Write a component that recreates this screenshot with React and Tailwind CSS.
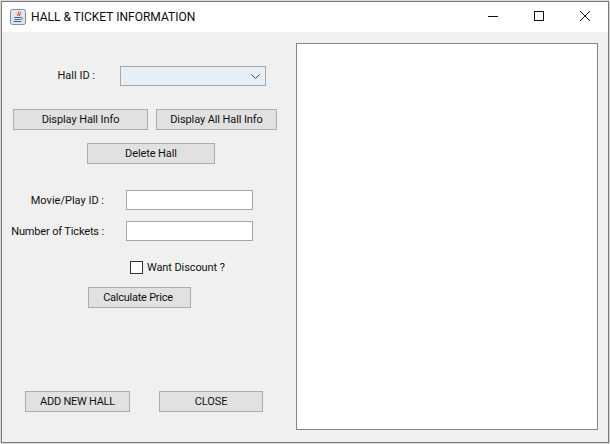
function Btn({ className, children }) {
  return (
    <div className={`h-[21px] pt-px flex items-center justify-center bg-[#e1e1e1] border border-[#adadad] text-[11px] tracking-[-0.1px] text-[#111] ${className}`}>
      {children}
    </div>
  );
}

function JavaIcon() {
  return (
    <svg width="16" height="16" viewBox="0 0 16 16" className="shrink-0">
      <rect x="0.5" y="0.5" width="15" height="15" rx="2" fill="#dfe6ee" stroke="#7c8ea3" />
      <path d="M8.5 2.5C10 4 6.5 5 8 7M10.5 3.5C11 5 9 5.5 9.5 7" fill="none" stroke="#d2541c" strokeWidth="1.2" />
      <path d="M4 8.5h7M4.5 10.5h6M3.5 12.5h8" stroke="#46658a" strokeWidth="1.1" />
      <path d="M11 8.5c2 0 2 2 0 2" fill="none" stroke="#46658a" />
    </svg>
  );
}

export default function App() {
  return (
    <div className="w-[610px] h-[444px] bg-[#d8d8d8] overflow-hidden" style={{ fontFamily: 'Roboto, sans-serif' }}>
      <div className="w-[608px] h-[442px] ml-px mt-px border border-[#7a7a7a] bg-[#f0f0f0] flex flex-col">
        {/* title bar */}
        <div className="h-[30px] bg-white flex items-center shrink-0 pl-[8px]">
          <JavaIcon />
          <span className="ml-[5px] text-[12px] text-[#0a0a0a]">HALL &amp; TICKET INFORMATION</span>
          <div className="ml-auto flex items-center">
            <svg width="46" height="30" viewBox="0 0 46 30">
              <path d="M18 14.5h10" stroke="#111" />
            </svg>
            <svg width="46" height="30" viewBox="0 0 46 30">
              <rect x="18.5" y="9.5" width="9" height="9" fill="none" stroke="#111" />
            </svg>
            <svg width="46" height="30" viewBox="0 0 46 30">
              <path d="M18 9l10 10M28 9L18 19" stroke="#111" />
            </svg>
          </div>
        </div>

        <div className="flex flex-1">
          {/* left form */}
          <div className="w-[294px] shrink-0 pl-[11px] pt-[34px] flex flex-col">
            <div className="flex items-center h-[20px]">
              <span className="w-[107px] pr-[25px] text-right text-[11px] text-[#111]">Hall ID :</span>
              <div className="w-[146px] h-[20px] bg-[#e6eff8] border border-[#a6a6a6] flex items-center justify-end pr-[5px]">
                <svg width="9" height="5" viewBox="0 0 9 5">
                  <path d="M0.5 0.5L4.5 4.5L8.5 0.5" fill="none" stroke="#444" />
                </svg>
              </div>
            </div>
            <div className="flex gap-[8px] mt-[23px]">
              <Btn className="w-[135px]">Display Hall Info</Btn>
              <Btn className="w-[121px]">Display All Hall Info</Btn>
            </div>
            <Btn className="w-[128px] ml-[74px] mt-[13px]">Delete Hall</Btn>
            <div className="flex items-center h-[20px] mt-[26px]">
              <span className="w-[91px] pt-[2px] text-right text-[11px] text-[#111]">Movie/Play ID :</span>
              <div className="w-[127px] h-[20px] ml-[22px] bg-white border border-[#a6a6a6]" />
            </div>
            <div className="flex items-center h-[20px] mt-[11px] -ml-[2px]">
              <span className="w-[93px] pt-[2px] text-right text-[11px] tracking-[-0.15px] text-[#111] whitespace-nowrap">Number of Tickets :</span>
              <div className="w-[127px] h-[20px] ml-[22px] bg-white border border-[#a6a6a6]" />
            </div>
            <div className="flex items-center ml-[117px] mt-[20px] h-[13px]">
              <div className="w-[13px] h-[13px] bg-white border border-[#333]" />
              <span className="ml-[4px] pt-[2px] text-[11px] tracking-[-0.1px] text-[#111]">Want Discount ?</span>
            </div>
            <Btn className="w-[103px] ml-[75px] mt-[13px] pr-[3px] tracking-[-0.25px]">Calculate Price</Btn>
            <div className="flex gap-[29px] ml-[12px] mt-[83px]">
              <Btn className="w-[105px] tracking-[-0.25px]">ADD NEW HALL</Btn>
              <Btn className="w-[104px]">CLOSE</Btn>
            </div>
          </div>

          {/* output area */}
          <div className="w-[302px] h-[387px] mt-[11px] bg-white border border-[#84848c]" />
        </div>
      </div>
    </div>
  );
}
